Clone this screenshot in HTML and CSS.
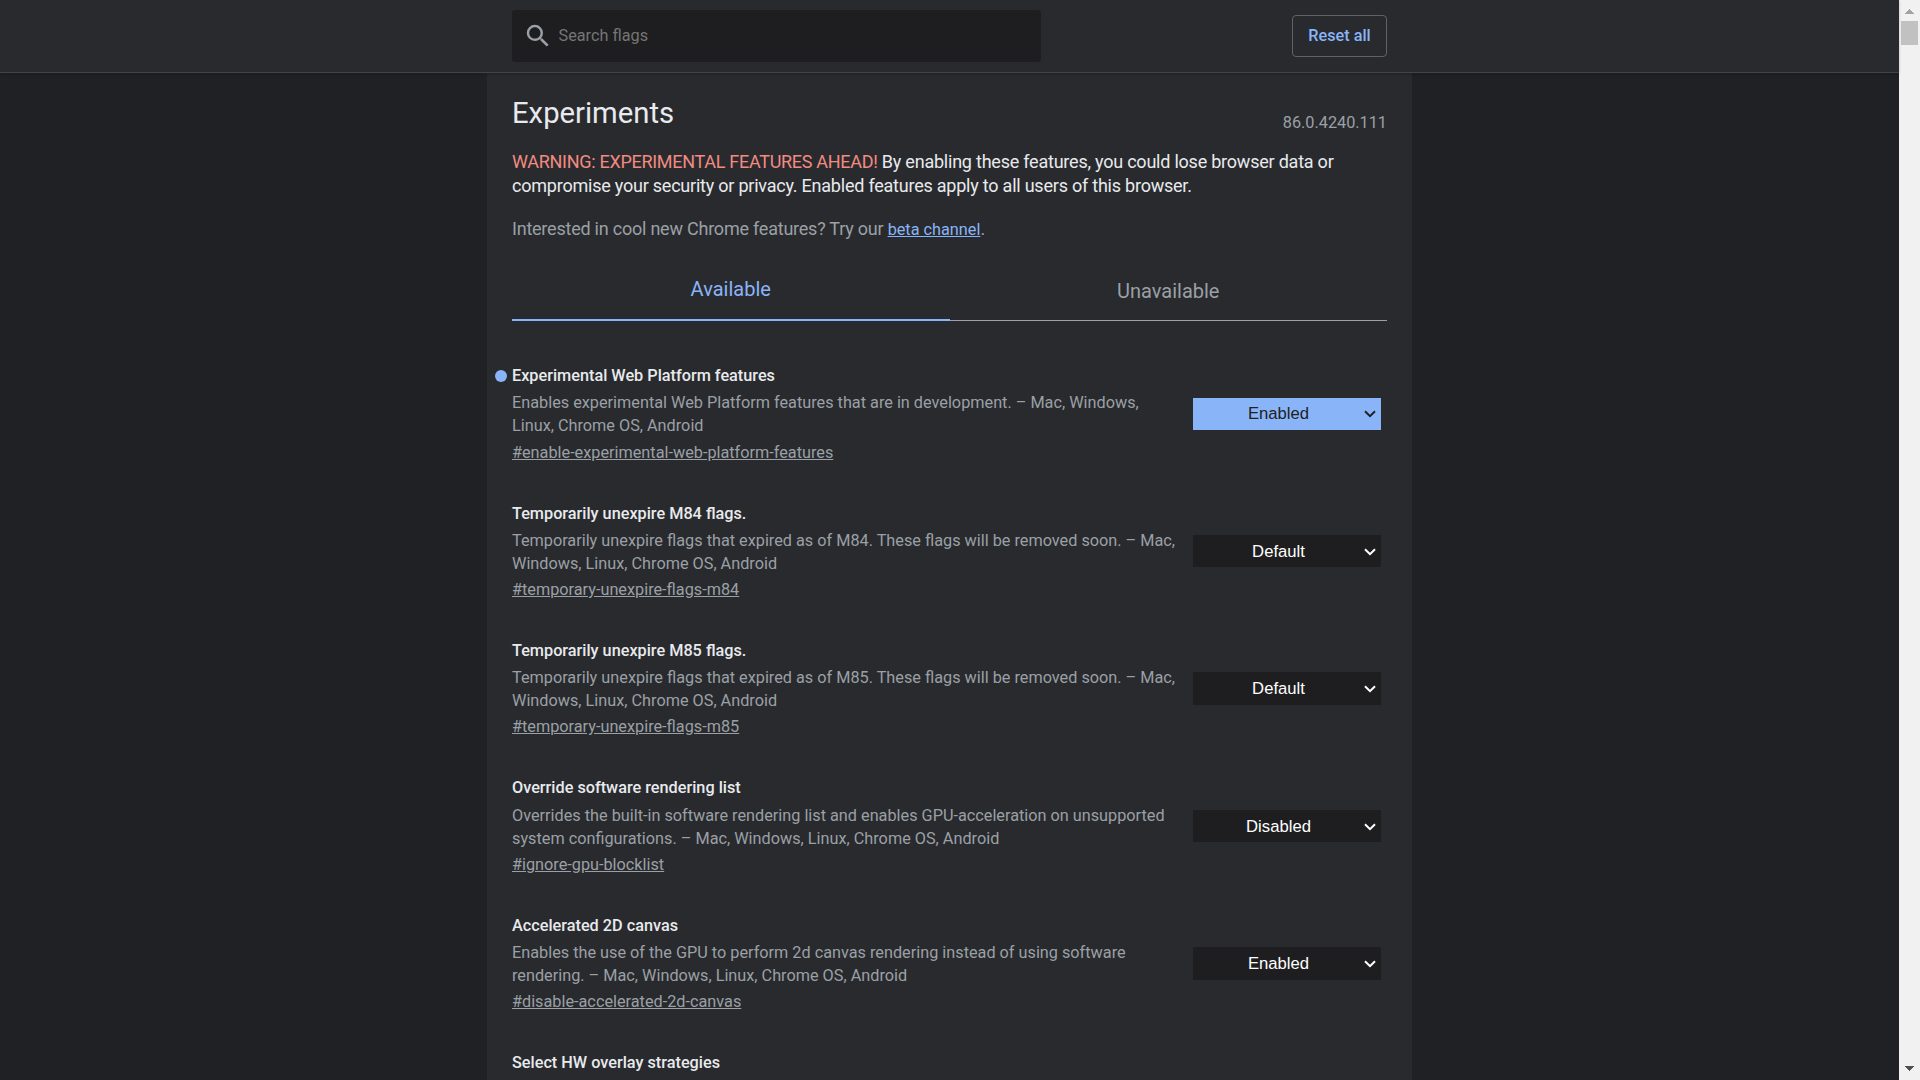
FILE: index.html
```html
<!DOCTYPE html>
<html lang="en">
<head>
<meta charset="utf-8">
<title>Experiments</title>
<link rel="stylesheet" href="styles.css">
</head>
<body>
<div class="viewport">
  <div class="page">
    <header class="topbar">
      <div class="topbar-inner">
        <label class="search">
          <svg class="search-icon" viewBox="0 0 24 24"><path d="M15.5 14h-.79l-.28-.27A6.471 6.471 0 0 0 16 9.5 6.5 6.5 0 1 0 9.5 16c1.61 0 3.09-.59 4.23-1.57l.27.28v.79l5 4.99L20.49 19l-4.99-5zm-6 0C7.01 14 5 11.99 5 9.5S7.01 5 9.5 5 14 7.01 14 9.5 11.99 14 9.5 14z"/></svg>
          <span class="placeholder">Search flags</span>
        </label>
        <button class="reset">Reset all</button>
      </div>
    </header>
    <main class="content">
      <div class="heading"><h1>Experiments</h1><span class="version">86.0.4240.111</span></div>
      <p class="blurb"><span class="warning">WARNING: EXPERIMENTAL FEATURES AHEAD!</span> By enabling these features, you could lose browser data or<br>compromise your security or privacy. Enabled features apply to all users of this browser.</p>
      <p class="promo">Interested in cool new Chrome features? Try our <a href="#">beta channel</a>.</p>
      <nav class="tabs"><div class="tab selected">Available</div><div class="tab">Unavailable</div></nav>
      <div class="flags">
        <section class="flag">
          <div class="info"><h2 class="modified">Experimental Web Platform features</h2><p>Enables experimental Web Platform features that are in development. – Mac, Windows,<br>Linux, Chrome OS, Android</p><a href="#">#enable-experimental-web-platform-features</a></div>
          <div class="select active"><span>Enabled</span><svg viewBox="0 0 12 8"><path d="M1 1.2l5 5 5-5"/></svg></div>
        </section>
        <section class="flag">
          <div class="info"><h2>Temporarily unexpire M84 flags.</h2><p>Temporarily unexpire flags that expired as of M84. These flags will be removed soon. – Mac,<br>Windows, Linux, Chrome OS, Android</p><a href="#">#temporary-unexpire-flags-m84</a></div>
          <div class="select"><span>Default</span><svg viewBox="0 0 12 8"><path d="M1 1.2l5 5 5-5"/></svg></div>
        </section>
        <section class="flag">
          <div class="info"><h2>Temporarily unexpire M85 flags.</h2><p>Temporarily unexpire flags that expired as of M85. These flags will be removed soon. – Mac,<br>Windows, Linux, Chrome OS, Android</p><a href="#">#temporary-unexpire-flags-m85</a></div>
          <div class="select"><span>Default</span><svg viewBox="0 0 12 8"><path d="M1 1.2l5 5 5-5"/></svg></div>
        </section>
        <section class="flag">
          <div class="info"><h2>Override software rendering list</h2><p>Overrides the built-in software rendering list and enables GPU-acceleration on unsupported<br>system configurations. – Mac, Windows, Linux, Chrome OS, Android</p><a href="#">#ignore-gpu-blocklist</a></div>
          <div class="select"><span>Disabled</span><svg viewBox="0 0 12 8"><path d="M1 1.2l5 5 5-5"/></svg></div>
        </section>
        <section class="flag">
          <div class="info"><h2>Accelerated 2D canvas</h2><p>Enables the use of the GPU to perform 2d canvas rendering instead of using software<br>rendering. – Mac, Windows, Linux, Chrome OS, Android</p><a href="#">#disable-accelerated-2d-canvas</a></div>
          <div class="select"><span>Enabled</span><svg viewBox="0 0 12 8"><path d="M1 1.2l5 5 5-5"/></svg></div>
        </section>
        <section class="flag">
          <div class="info"><h2>Select HW overlay strategies</h2></div>
        </section>
      </div>
    </main>
  </div>
  <div class="scrollbar">
    <svg class="up" viewBox="0 0 9 5" shape-rendering="crispEdges"><path d="M4 0h1v1h1v1h1v1h1v1h1v1H0V4h1V3h1V2h1V1h1z"/></svg>
    <div class="thumb"></div>
    <svg class="down" viewBox="0 0 9 5" shape-rendering="crispEdges"><path d="M0 0h9v1H8v1H7v1H6v1H5v1H4V4H3V3H2V2H1V1H0z"/></svg>
  </div>
</div>
</body>
</html>
```
FILE: styles.css
```css
* { box-sizing: border-box; }
body { margin: 0; background: #202124; color: #e8eaed; font-family: Roboto, sans-serif; font-size: 16.25px; overflow: hidden; }
h1, h2, p { margin: 0; font-weight: 400; }
.viewport { display: flex; height: 1080px; overflow: hidden; }
.page { flex: 1; display: flex; flex-direction: column; align-items: center; min-width: 0; }
.topbar { flex: none; width: 100%; height: 73px; background: #292a2d; border-bottom: 1px solid #434447; box-shadow: 0 1px 3px rgba(0, 0, 0, .2); display: flex; justify-content: center; z-index: 1; }
.topbar-inner { width: 875px; height: 72px; display: flex; justify-content: space-between; align-items: center; }
.search { width: 529px; height: 52px; background: #1e1e20; border-radius: 3px; display: flex; align-items: center; padding: 0 0 1px 11px; }
.search-icon { width: 30px; height: 30px; fill: #9aa0a6; }
.placeholder { margin-left: 5.5px; color: #757575; font-size: 16.25px; line-height: 19px; padding-bottom: 1px; }
.reset { width: 95px; height: 42px; padding: 0 0 2px; background: none; border: 1px solid #5f6368; border-radius: 4px; color: #8ab4f8; font: 500 16.25px Roboto, sans-serif; }
.content { width: 925px; flex: 1; background: #292a2d; padding: 20px 25px 0; }
.heading { display: flex; justify-content: space-between; line-height: 40px; }
h1 { font-size: 29.25px; }
.version { color: #9aa0a6; font-size: 16.25px; padding-top: 10px; }
.blurb, .promo { font-size: 18px; line-height: 24px; white-space: nowrap; letter-spacing: -.225px; }
.blurb { margin-top: 7px; }
.warning { color: #f28b82; letter-spacing: -.29px; }
.promo { height: 24px; margin-top: 19px; color: #9aa0a6; }
.promo a { color: #8ab4f8; font-size: 16.25px; letter-spacing: 0; }
.tabs { display: flex; margin-top: 27px; height: 53px; }
.tab { flex: 1; border-bottom: 1px solid #9aa0a6; color: #9aa0a6; font-size: 20px; line-height: 46px; text-align: center; }
.tab.selected { border-bottom: 2px solid #8ab4f8; color: #8ab4f8; line-height: 42px; }
.flags { padding-top: 43.2px; }
.flag { display: flex; justify-content: space-between; height: 137.4px; padding-right: 6px; }
.info { white-space: nowrap; color: #9aa0a6; line-height: 23px; }
h2 { font-size: 16.25px; font-weight: 500; line-height: 23px; color: #e8eaed; position: relative; }
.modified::before { content: ""; position: absolute; left: -17px; top: 5.5px; width: 12px; height: 12px; border-radius: 50%; background: #8ab4f8; }
.info p { margin: 4.25px 0 3.15px; }
.info a { color: inherit; }
.select { width: 188px; height: 32.5px; margin-top: 33.4px; background: #1e1e20; color: #fff; display: flex; align-items: center; justify-content: flex-end; padding: 1px 5px 0 0; font: 16.67px "Liberation Sans", Arial, sans-serif; }
.select span { flex: 1; text-align: center; }
.select svg { width: 12px; height: 8px; fill: none; stroke: currentColor; stroke-width: 2; }
.select.active { background: #8ab4f8; color: #202124; }
.scrollbar { width: 21px; background: #f1f1f1; display: flex; flex-direction: column; align-items: center; }
.up, .down { width: 9px; height: 5px; fill: #a3a3a3; }
.up { margin-top: 9px; }
.down { margin: auto 0 9px; fill: #505050; }
.thumb { width: 17px; height: 24px; margin-top: 7px; background: #c1c1c1; }
```
